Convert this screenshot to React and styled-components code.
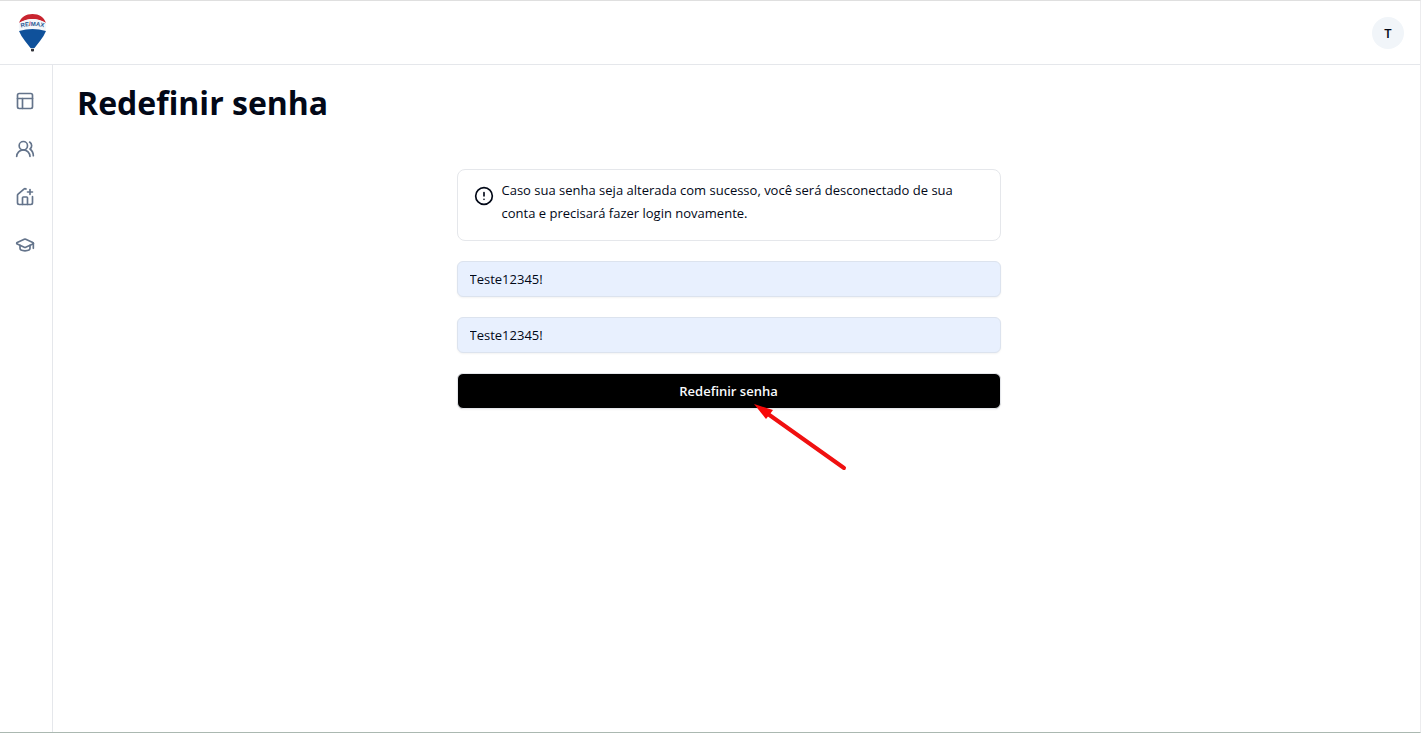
import { useState } from "react";
import styled, { createGlobalStyle } from "styled-components";
import {
  CircleAlert,
  GraduationCap,
  PanelsTopLeft,
  UsersRound,
} from "lucide-react";

const GlobalStyle = createGlobalStyle`
  * {
    box-sizing: border-box;
  }
  body {
    margin: 0;
    background-color: white;
    color: #020817;
    font-family: "Segoe UI", "Open Sans", "Noto Sans", sans-serif;
    font-size: 13px;
  }
`;

const Container = styled.div`
  min-height: 100vh;
  display: flex;
  flex-direction: column;
  border-top: 1px solid #dfdfdf;
  border-right: 1px solid #ececee;
  border-bottom: 1px solid #abb8b1;
`;

const Header = styled.header`
  height: 64px;
  padding: 0 16px;
  display: flex;
  align-items: center;
  justify-content: space-between;
  border-bottom: 1px solid #e5e7eb;
`;

const LogoLink = styled.a`
  display: flex;
`;

const Avatar = styled.button`
  width: 32px;
  height: 32px;
  padding: 0;
  border: none;
  border-radius: 50%;
  background-color: #f1f5f9;
  color: #020817;
  font-family: inherit;
  font-size: 13px;
  font-weight: 600;
  cursor: pointer;
`;

const Body = styled.div`
  flex: 1;
  display: flex;
`;

const Sidebar = styled.nav`
  width: 53px;
  padding: 16px 15px;
  display: flex;
  flex-direction: column;
  gap: 8px;
  border-right: 1px solid #e5e7eb;
`;

const NavLink = styled.a`
  height: 40px;
  display: flex;
  align-items: center;
  color: #64748b;
`;

const Main = styled.main`
  flex: 1;
  padding: 18px 40px 24px 24px;
`;

const Title = styled.h1`
  margin: 0 0 46px;
  font-size: 32px;
  font-weight: 700;
  line-height: 40px;
`;

const Form = styled.form`
  max-width: 544px;
  margin: 0 auto;
  display: flex;
  flex-direction: column;
  gap: 20px;
`;

const Alert = styled.div`
  padding: 9px 16px 15px;
  display: flex;
  gap: 8px;
  border: 1px solid #e5e7eb;
  border-radius: 8px;

  svg {
    flex-shrink: 0;
    margin-top: 7px;
  }
`;

const AlertText = styled.p`
  margin: 0;
  line-height: 23px;
`;

const Input = styled.input`
  height: 36px;
  padding: 0 12px;
  border: 1px solid #dce3ee;
  border-radius: 6px;
  background-color: #e8f0fe;
  box-shadow: 0 1px 2px rgba(0, 0, 0, 0.05);
  color: #020817;
  font-family: inherit;
  font-size: 13px;
`;

const Submit = styled.div`
  position: relative;
  display: flex;
`;

const Button = styled.button`
  flex: 1;
  height: 36px;
  border: 1px solid #e5e7eb;
  border-radius: 6px;
  background-color: black;
  box-shadow: 0 1px 2px rgba(0, 0, 0, 0.05);
  color: #f8fafc;
  font-family: inherit;
  font-size: 13px;
  font-weight: 600;
  cursor: pointer;
`;

const Arrow = styled.svg`
  position: absolute;
  top: 30px;
  left: calc(50% + 25px);
  pointer-events: none;
`;

const Logo = () => (
  <svg width="33" height="40" viewBox="0 0 33 40" aria-hidden="true">
    <path d="M3 10C5 4 10 1 16.500 1S28 4 30 10Q23 6 16.500 6T3 10Z" fill="#c8242f" />
    <path
      d="M3 10Q10 6 16.500 6T30 10Q31 14 29 19Q23 17 16.500 17T4 19Q2 14 3 10Z"
      fill="#f3f7fb"
    />
    <path
      d="M3 18Q10 16 16.500 16T30 18Q28 23 24 28L18.500 35H14.500L9 28Q5 23 3 18Z"
      fill="#0f519b"
    />
    <path d="M14.500 35h4l-1 1h-2Z" fill="#b9c4d2" />
    <path d="M15 36h3v2q-1.500 1-3 0Z" fill="#34353b" />
    <path id="logo-arc" d="M3 15Q16.500 11 30 15" fill="none" />
    <text
      textAnchor="middle"
      fontFamily="Liberation Sans, sans-serif"
      fontSize="6"
      fontWeight="700"
      fill="#265894"
    >
      <textPath href="#logo-arc" startOffset="50%">
        RE<tspan fill="#c8242f">/</tspan>MAX
      </textPath>
    </text>
  </svg>
);

const HouseAdd = ({ size }) => (
  <svg
    width={size}
    height={size}
    viewBox="0 0 24 24"
    fill="none"
    stroke="currentColor"
    strokeWidth="2"
    strokeLinecap="round"
    strokeLinejoin="round"
    aria-hidden="true"
  >
    <path d="M13.220 2.416a2 2 0 0 0-2.511.057l-7 5.999A2 2 0 0 0 3 10v9a2 2 0 0 0 2 2h14a2 2 0 0 0 2-2v-7.354" />
    <path d="M15 21v-8a1 1 0 0 0-1-1h-4a1 1 0 0 0-1 1v8" />
    <path d="M15 6h6" />
    <path d="M18 3v6" />
  </svg>
);

const links = [
  { label: "Painel", icon: PanelsTopLeft },
  { label: "Usuários", icon: UsersRound },
  { label: "Novo imóvel", icon: HouseAdd },
  { label: "Cursos", icon: GraduationCap },
];

const App = () => {
  const [password, setPassword] = useState("Teste12345!");
  const [confirm, setConfirm] = useState("Teste12345!");

  return (
    <>
      <GlobalStyle />
      <Container>
        <Header>
          <LogoLink href="#" aria-label="RE/MAX">
            <Logo />
          </LogoLink>
          <Avatar type="button">T</Avatar>
        </Header>
        <Body>
          <Sidebar>
            {links.map(({ label, icon: Icon }) => (
              <NavLink key={label} href="#" aria-label={label}>
                <Icon size={20} />
              </NavLink>
            ))}
          </Sidebar>
          <Main>
            <Title>Redefinir senha</Title>
            <Form onSubmit={(e) => e.preventDefault()}>
              <Alert role="alert">
                <CircleAlert size={20} />
                <AlertText>
                  Caso sua senha seja alterada com sucesso, você será
                  desconectado de sua conta e precisará fazer login novamente.
                </AlertText>
              </Alert>
              <Input
                type="text"
                aria-label="Nova senha"
                value={password}
                onChange={(e) => setPassword(e.target.value)}
              />
              <Input
                type="text"
                aria-label="Confirmar senha"
                value={confirm}
                onChange={(e) => setConfirm(e.target.value)}
              />
              <Submit>
                <Button type="submit">Redefinir senha</Button>
                <Arrow width="94" height="70" aria-hidden="true">
                  <path
                    d="M14 11L90 65"
                    stroke="#f01010"
                    strokeWidth="4"
                    strokeLinecap="round"
                  />
                  <path d="M0 1L19 7L16 11L12 16Z" fill="#f80808" />
                </Arrow>
              </Submit>
            </Form>
          </Main>
        </Body>
      </Container>
    </>
  );
};

export default App;
